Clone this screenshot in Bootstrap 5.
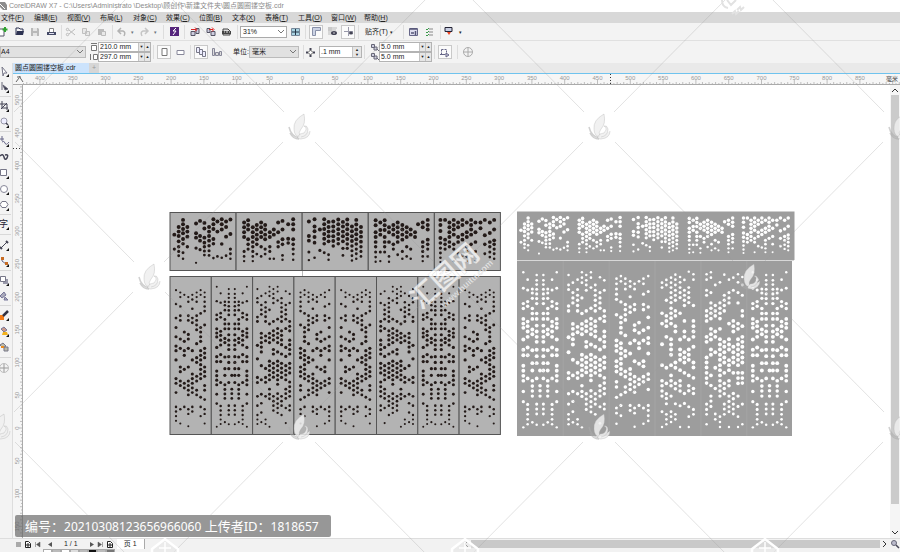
<!DOCTYPE html>
<html lang="zh-CN">
<head>
<meta charset="utf-8">
<meta name="viewport" content="width=device-width, initial-scale=1">
<title>CorelDRAW X7</title>
<link rel="stylesheet" href="https://cdn.jsdelivr.net/npm/bootstrap@5.3.0/dist/css/bootstrap.min.css">
<script src="https://cdn.jsdelivr.net/npm/bootstrap@5.3.0/dist/js/bootstrap.bundle.min.js"></script>
<style>
body{font:7px/10px "Liberation Sans","Noto Sans CJK SC",sans-serif;color:#222;background:#f3f3f3;-webkit-text-size-adjust:none}
.titlebar{height:12px;background:#fff;color:#8b8b8b}
.menus{height:11px;background:#d8d8d8}
.menus a{width:33px;color:#222;text-decoration:none;white-space:nowrap;padding-left:1px}
.tools{height:18px;border-bottom:1px solid #e0e0e0}
.tools .ib:first-child{margin-left:-5px}
.props{height:22px}
.tabs{height:11px;background:#e9e9e9;border-bottom:1px solid #6fc3ee;padding-left:13px}
.filetab{width:76px;background:#cce3fc;padding-left:2px}
.plustab{width:10px;background:#d6d6d6;color:#999}
button{border:0;background:none;padding:0;color:inherit;font:inherit;line-height:inherit}
.ib{width:16px;height:16px;display:flex;align-items:center;justify-content:center;flex:none}
.ib.on{border:1px solid #c9c9c9;background:#fbfbfb;width:14px;height:14px;margin:0 1px}
.ib.flat{width:10px;height:10px}
.arrow{width:7px;flex:none;text-align:center;font-size:5px}
.vr1{width:1px;height:14px;background:#ddd;margin:0 2px;flex:none}
.hr1{height:1px;width:11px;background:#d8d8d8;margin:1px 0;flex:none}
.hr1.wide{margin:2px 0}
.combo{position:relative;height:12px;flex:none}
.combo select{appearance:none;width:100%;height:12px;border:1px solid #bbb;background:#e1e1e1;font:inherit;padding:0 2px;display:block;border-radius:0;color:#222}
.combo.white select{background:#fff;border-color:#aaa}
.combo svg{position:absolute;right:3px;top:4px;pointer-events:none}
.w-zoom{width:47px}.w-page{width:86px}.w-unit{width:50px}.w-size{width:53px}.w-nudge{width:43px}
.num{display:flex;height:10px;border:1px solid #b3b3b3;background:#fff}
.num input{border:0;padding:0 0 0 1px;width:100%;min-width:0;font:inherit;color:#222;background:none}
.num button{width:6px;flex:none;background:#e6e6e6;font-size:4px;line-height:8px;border-left:1px solid #c4c4c4}
.num.tall{height:12px}
.num.tall button{width:9px;line-height:5px}
.toolbox{width:13px;border-right:1px solid #ddd;margin-top:-11px;background:#f3f3f3;position:relative}
.toolbox .ib{margin-left:-4px}
.rule{height:11px;background:#f6f6f6;border-bottom:1px solid #aaa}
.vrule{width:10px;background:#f6f6f6;border-right:1px solid #aaa;overflow:hidden}
.canvas{background:#fff;position:relative;overflow:hidden}
.canvas svg{position:absolute;left:0;top:0}
.vscroll{width:10px;background:#f5f5f5}
.vthumb{width:8px;background:#cbcbcb;flex:410}
.vrest{flex:24}
.status{height:11px;border-top:1px solid #ddd;background:#f2f2f2}
.pages{width:461px;flex:none}
.pagetab{width:28px;background:#fff;border-right:1px solid #aaa}
.hthumb{height:8px;background:#c9c9c9}
.palette{height:3px;background:#f2f2f2;padding-left:43px}
.palette i{width:9px;height:3px;border:1px solid #aaa;border-bottom:0}
.p1{background:#bbb}.p2{background:#fff}.p3{background:#ddd}.p4{background:#111}.p5{background:#777}
.notice{position:absolute;left:15px;bottom:15px;height:22px;padding:0 12px 0 10px;background:rgba(102,102,102,.68);color:#fff;font:13px/22px "Noto Sans","Noto Sans CJK SC",sans-serif;border-radius:2px;white-space:nowrap;z-index:5}
.notice span{font-size:12px}
.mark-layer{position:absolute;inset:0;width:100%;height:100%;pointer-events:none;z-index:6}
svg{overflow:visible;flex:none;display:block}
svg.clip1{overflow:hidden}
</style>
</head>
<body class="vh-100 overflow-hidden position-relative d-flex flex-column">
<header class="titlebar d-flex align-items-center flex-shrink-0">
<svg width="9" height="10" viewBox="0 0 9 10"><path d="M0 1h5l2 3v5H3L0 6z" fill="#8d8d8d"/><path d="M0 3l5 5" stroke="#fff"/></svg>
<span class="text-nowrap">CorelDRAW X7 - C:\Users\Administrato \Desktop\顾创作\新建文件夹\圆点圆圈镂空板.cdr</span>
</header>
<nav class="menus d-flex align-items-center flex-shrink-0" aria-label="菜单">
<a href="#">文件(<u>F</u>)</a><a href="#">编辑(<u>E</u>)</a><a href="#">视图(<u>V</u>)</a><a href="#">布局(<u>L</u>)</a><a href="#">对象(<u>C</u>)</a><a href="#">效果(<u>C</u>)</a><a href="#">位图(<u>B</u>)</a><a href="#">文本(<u>X</u>)</a><a href="#">表格(<u>T</u>)</a><a href="#">工具(<u>O</u>)</a><a href="#">窗口(<u>W</u>)</a><a href="#">帮助(<u>H</u>)</a>
</nav>
<div class="tools d-flex align-items-center flex-shrink-0" role="toolbar" aria-label="标准">
<button class="ib" aria-label="新建"><svg width="10" height="10"><path d="M1 2h5v7H1z" fill="#fff" stroke="#556"/><path d="M7 0v5M4.500 2.500h5" stroke="#2fa32f" stroke-width="2"/></svg></button>
<button class="ib" aria-label="打开"><svg width="9" height="9"><path d="M1 8V1h3l1 1h3v2" fill="none" stroke="#2d3252"/><path d="M1 8l1-4h7L8 8z" fill="#2d3252"/></svg></button>
<button class="ib" aria-label="保存"><svg width="8" height="8"><path d="M0 0h7l1 1v7H0z" fill="#b9b9b9"/><path d="M2 0h4v3H2zM2 5h4v3H2z" fill="#e5e5e5"/></svg></button>
<button class="ib" aria-label="打印"><svg width="9" height="8"><path d="M2.500 4V.5h4V4" fill="#fff" stroke="#888"/><path d="M0 4h9v3H0z" fill="#444a66"/><path d="M2 5.500h5" stroke="#dde"/></svg></button>
<i class="vr1 me-0"></i>
<button class="ib" aria-label="剪切"><svg width="9" height="8" fill="none" stroke="#bbb"><path d="M3 2l6 5M3 6l6-5"/><circle cx="1.500" cy="1.500" r="1.200"/><circle cx="1.500" cy="6.500" r="1.200"/></svg></button>
<button class="ib" aria-label="复制"><svg width="8" height="8" fill="#e8e8e8" stroke="#c0c0c0"><path d="M.5.5h4v5h-4zM3.500 3.500h4v4h-4z"/></svg></button>
<button class="ib" aria-label="粘贴"><svg width="8" height="8"><path d="M0 1h6v6H0z" fill="#bbb"/><path d="M3.500 3.500h4v4h-4z" fill="#e8e8e8" stroke="#bbb"/></svg></button>
<i class="vr1 me-0"></i>
<button class="ib" aria-label="撤消"><svg width="9" height="8"><path d="M1 3h5q3 1 1 5M4 0L1 3l3 3" fill="none" stroke="#b3b3b3" stroke-width="1.500"/></svg></button><span class="arrow text-secondary">▾</span>
<button class="ib" aria-label="重做"><svg width="9" height="8"><path d="M8 3H3Q0 4 2 8M5 0l3 3-3 3" fill="none" stroke="#c5c5c5" stroke-width="1.500"/></svg></button><span class="arrow text-secondary">▾</span>
<i class="vr1 ms-1"></i>
<button class="ib" aria-label="搜索内容"><svg width="9" height="9"><path d="M0 0h9v9H0z" fill="#55257c"/><path d="M6 1L3 4h3L3 8" stroke="#fff" fill="none"/></svg></button>
<i class="vr1"></i>
<button class="ib" aria-label="导入"><svg width="10" height="9"><path d="M1 4.500h4v4H1zM6 1.500h3v5H6z" fill="#ccd" stroke="#556"/><path d="M1 2.500h5M5 .5l2 2-2 2" stroke="#d22" fill="none"/></svg></button>
<button class="ib" aria-label="导出"><svg width="10" height="9"><path d="M1 1.500h3v4H1zM5 4.500h4v4H5z" fill="#ccd" stroke="#556"/><path d="M3 2.500h4M6 .5l2 2-2 2" stroke="#d22" fill="none"/></svg></button>
<button class="ib" aria-label="发布为PDF"><svg width="10" height="8"><path d="M1 7V1h5l2 2v4z" fill="#ddd" stroke="#444"/><path d="M0 3h9v3H0z" fill="#444"/><path d="M2 4h1M4 4h2M7 4h1" stroke="#ddd"/></svg></button>
<i class="vr1"></i>
<div class="combo white w-zoom"><select aria-label="缩放级别"><option>31%</option></select><svg width="6" height="4"><path d="M0 0l3 3 3-3" fill="none" stroke="#777"/></svg></div>
<button class="ib" aria-label="全屏预览"><svg width="9" height="8"><path d="M.5.5h8v7h-8z" fill="#a9d3e2" stroke="#78899a"/><path d="M4.500 1v6M1 4h7" stroke="#234"/></svg></button>
<i class="vr1"></i>
<button class="ib on" aria-label="显示标尺"><svg width="9" height="9"><path d="M.5.5h8v3h-5v5h-3z" fill="#ccd3e4" stroke="#8890a8"/></svg></button>
<button class="ib" aria-label="显示网格"><svg width="9" height="9"><path d="M0 1h9M0 3h8M1 0v8M3 0v8" stroke="#bbb"/><ellipse cx="6" cy="6" rx="3" ry="2" fill="#445"/><circle cx="6" cy="6" r=".7" fill="#fff"/></svg></button>
<button class="ib on" aria-label="显示辅助线"><svg width="9" height="9"><path d="M0 4.500h9M4.500 0v9" stroke="#99a"/><ellipse cx="7" cy="6" rx="2" ry="1.500" fill="#445"/></svg></button>
<i class="vr1"></i>
<button class="text-nowrap ps-1">贴齐(T)</button><span class="arrow">▾</span>
<i class="vr1 ms-2"></i>
<button class="ib" aria-label="欢迎屏幕"><svg width="9" height="8"><path d="M.5.5h8v7h-8z" fill="#dde" stroke="#668"/><path d="M1 1h7M2 5h3M6.500 3v4" stroke="#557" stroke-width="1.500"/></svg></button>
<button class="ib" aria-label="选项"><svg width="8" height="8"><path d="M3 1h4M3 4h4M3 7h4" stroke="#888"/><path d="M0 1l1 1 2-2M0 4l1 1 2-2M0 7l1 1 2-2" stroke="#3a9a4a" fill="none"/></svg></button>
<i class="vr1 me-0"></i>
<button class="ib" aria-label="应用程序启动器"><svg width="9" height="9"><path d="M1 .5h7v4H1z" fill="#c9cfe4" stroke="#223"/><path d="M3 5h4L5 8z" fill="#e42"/></svg></button><span class="arrow">▾</span>
</div>
<div class="props d-flex align-items-center flex-shrink-0" role="toolbar" aria-label="属性栏">
<div class="combo w-page"><select class="ps-0" aria-label="页面大小"><option>A4</option></select><svg width="6" height="4"><path d="M0 0l3 3 3-3" fill="none" stroke="#777"/></svg></div>
<svg class="ms-1" width="8" height="18" fill="#fff" stroke="#777"><path d="M1.500 2.500h5v5h-5zM1 .5h6M.5 11v6M3.500 11.500h4v5h-4z"/></svg>
<div class="d-flex flex-column w-size">
<div class="num"><input aria-label="页面宽度" value="210.0 mm"><button aria-label="减小">▼</button><button aria-label="增大">▲</button></div>
<div class="num"><input aria-label="页面高度" value="297.0 mm"><button aria-label="减小">▼</button><button aria-label="增大">▲</button></div></div>
<i class="vr1"></i>
<button class="ib on" aria-label="纵向"><svg width="7" height="9"><path d="M1 .5h5v7H1z" fill="#fff" stroke="#777"/></svg></button>
<button class="ib" aria-label="横向"><svg width="9" height="7"><path d="M1 1.500h7v4H1z" fill="#fff" stroke="#88889a"/></svg></button>
<i class="vr1"></i>
<button class="ib on" aria-label="所有页面"><svg width="10" height="10" fill="#eef" stroke="#778"><path d="M.5.5h3v5h-3zM3.500 2.500h3v5h-3zM6.500 4.500h3v5h-3z"/></svg></button>
<button class="ib" aria-label="当前页"><svg width="10" height="9" fill="#ddd" stroke="#889"><path d="M.5.5h2v7h-2zM3.500 4.500h3v3h-3zM7.500 3.500h2v4h-2z"/></svg></button>
<label class="ms-2 text-nowrap" for="unit">单位:</label>
<div class="combo w-unit"><select id="unit"><option>毫米</option></select><svg width="6" height="4"><path d="M0 0l3 3 3-3" fill="none" stroke="#777"/></svg></div>
<i class="vr1 ms-1"></i>
<svg class="me-1" width="9" height="9"><path d="M4.500 2L7 4.500 4.500 7 2 4.500z" fill="#fff" stroke="#555"/><path d="M4.500 0v2M4.500 7v2M0 4.500h2M7 4.500h2" stroke="#445" stroke-width="2"/></svg>
<div class="num tall w-nudge"><input aria-label="微调距离" value=".1 mm"><button aria-label="微调">▲<br>▼</button></div>
<i class="vr1"></i>
<svg class="ms-1" width="8" height="18" fill="#ccd" stroke="#667"><path d="M.5 1.500h3v3h-3zM3 4h3v3H3zM.5 10.500h3v3h-3zM3 13h3v3H3zM6 6l2 2M6 15l2 2"/></svg>
<div class="d-flex flex-column w-size">
<div class="num"><input aria-label="再制X" value="5.0 mm"><button aria-label="减小">▼</button><button aria-label="增大">▲</button></div>
<div class="num"><input aria-label="再制Y" value="5.0 mm"><button aria-label="减小">▼</button><button aria-label="增大">▲</button></div></div>
<i class="vr1"></i>
<button class="ib on" aria-label="视为填充"><svg width="9" height="9"><path d="M1.500 1.500h5v5h-5z" fill="none" stroke="#668" stroke-dasharray="2 1"/><path d="M0 6.500h5M6 5l3 2-3 2z" stroke="#668" fill="#ccd"/></svg></button>
<i class="vr1 ms-1"></i>
<button class="ib" aria-label="快速自定义"><svg width="10" height="10" fill="none" stroke="#aaa"><circle cx="5" cy="5" r="4.500"/><path d="M5 1v8M1 5h8"/></svg></button>
</div>
<div class="tabs d-flex flex-shrink-0">
<button class="filetab text-nowrap text-start">圆点圆圈镂空板.cdr</button><button class="plustab" aria-label="新建文档">+</button>
</div>
<main class="d-flex flex-grow-1 overflow-visible" style="min-height:0">
<div class="toolbox flex-shrink-0" id="toolbox" role="toolbar" aria-label="工具箱"></div>
<div class="d-flex flex-column flex-grow-1" style="min-width:0">
<div class="rule flex-shrink-0 overflow-hidden"><svg id="hr" width="100%" height="10"></svg></div>
<div class="d-flex flex-grow-1" style="min-height:0">
<div class="vrule flex-shrink-0"><svg id="vr" width="10" height="100%"></svg></div>
<div class="canvas flex-grow-1"><svg id="art" width="867" height="454" viewBox="23 85 867 454"></svg></div>
<div class="vscroll d-flex flex-column align-items-center flex-shrink-0"><button class="ib flat" aria-label="向上"><svg width="6" height="4"><path d="M0 4l3-3 3 3" fill="none" stroke="#333"/></svg></button><div class="vthumb"></div><div class="vrest"></div><button class="ib flat" aria-label="向下"><svg width="6" height="4"><path d="M0 0l3 3 3-3" fill="none" stroke="#333"/></svg></button></div>
</div></div></main>
<footer class="status d-flex align-items-center flex-shrink-0">
<div class="pages d-flex align-items-center gap-1 ps-3">
<svg width="5" height="5"><path d="M0 0h5v5H0z" fill="#aaa"/></svg>
<button aria-label="在前面添加页"><svg width="6" height="7"><path d="M.5.5h3l2 2v4h-5z" fill="#fff" stroke="#222"/><path d="M3 2v4M1 4h4" stroke="#222"/></svg></button>
<button aria-label="首页"><svg width="5" height="5"><path d="M.5 0v5M5 0L1.500 2.500 5 5z" stroke="#555" stroke-width=".5" fill="#555"/></svg></button>
<button class="ms-1" aria-label="上一页"><svg width="4" height="5"><path d="M4 0L0 2.500 4 5z" fill="#555"/></svg></button>
<span class="mx-2 text-nowrap">1 / 1</span>
<button aria-label="下一页"><svg width="4" height="5"><path d="M0 0l4 2.500L0 5z" fill="#555"/></svg></button>
<button aria-label="末页"><svg width="5" height="5"><path d="M4.500 0v5M0 0l3.500 2.500L0 5z" stroke="#555" stroke-width=".5" fill="#555"/></svg></button>
<button aria-label="在后面添加页"><svg width="6" height="7"><path d="M.5.5h3l2 2v4h-5z" fill="#fff" stroke="#222"/><path d="M3 2v4M1 4h4" stroke="#222"/></svg></button>
<button class="pagetab">页 1</button></div>
<button class="ib flat" aria-label="向左"><svg width="4" height="6"><path d="M4 0L1 3l3 3" fill="none" stroke="#333"/></svg></button>
<div class="hthumb flex-grow-1"></div>
<button class="ib flat" aria-label="向右"><svg width="4" height="6"><path d="M0 0l3 3-3 3" fill="none" stroke="#333"/></svg></button>
<button class="ib flat" aria-label="导航器"><svg width="8" height="8"><circle cx="3" cy="3" r="2.500" fill="#bbc" stroke="#667"/><path d="M5 5l3 3" stroke="#445" stroke-width="1.500"/></svg></button>
</footer>
<div class="palette d-flex flex-shrink-0"><i class="p2"></i><i class="p1"></i><i class="p2"></i><i class="p3"></i><i class="p1"></i><i class="p4"></i><i class="p1"></i><i class="p5"></i></div>
<div class="notice">编号：<span>20210308123656966060</span> 上传者ID：<span>1818657</span></div>
<svg class="mark-layer clip1" id="marks" aria-hidden="true"></svg>
<script>
// Toolbox glyphs; numbers are separators.
const G=[
['选择','<path d="M3 1l5 6-3 0-1 3z" fill="#fff" stroke="#778"/>',1],
['形状','<path d="M3 0v8M4 3l5 4-3 1z" stroke="#667" fill="#334"/>',1],0,
['裁剪','<path d="M3 0v7h6M0 3h8v6M2 8l6-6" fill="none" stroke="#445"/>',1],
['缩放','<circle cx="5" cy="4" r="3" fill="#eef" stroke="#99a"/><path d="M7 6l2 2" stroke="#445" stroke-width="1.500"/>',1],0,
['手绘','<path d="M3 0v5M1 3h4M3 6q2-2 3 1t4-1" fill="none" stroke="#668"/>',1],
['艺术笔','<path d="M1 4q3-3 4 1t3 1q2-4-2-3" fill="none" stroke="#445" stroke-width="1.500"/>',0],
['矩形','<path d="M1.500 1.500h6v6h-6z" fill="#fff" stroke="#778"/>',1],
['椭圆','<circle cx="5" cy="5" r="3.500" fill="#fff" stroke="#889"/>',1],
['多边形','<path d="M3 1.500h4l2 3-2 3H3l-2-3z" fill="#fff" stroke="#778"/>',1],0,
['文本','<text x="0" y="8" font-size="9" fill="#223">字</text>',1],1,
['度量','<path d="M2 8l6-6" stroke="#445"/><path d="M1 7l2 2M7 1l2 2" stroke="#445" stroke-width="2"/>',1],
['连接器','<path d="M3 2v3l4 3" fill="none" stroke="#668"/><path d="M2 1h3v3H2zM6 6h3v3H6z" fill="#c76b23"/>',1],0,
['阴影','<path d="M4 4h5v5H4z" fill="#99a"/><path d="M1.500 1.500h5v5h-5z" fill="#fff" stroke="#778"/>',1],
['透明度','<path d="M1 5l4-4 2 3-4 3zM6 6l3 3H5z" fill="#aab" stroke="#779"/>',0],0,
['颜色滴管','<path d="M0 5h5v5H0z" fill="#f47b16"/><path d="M4 6l5-5" stroke="#334" stroke-width="2.500"/>',1],
['交互式填充','<path d="M2 3l3-2 3 3-3 2z" fill="#c98" stroke="#779"/><path d="M4 6h4l1 3H3z" fill="#f2b21c"/>',1],
['智能填充','<path d="M1 3l3-2 3 3-3 2zM5 5h4v4H5z" fill="#bba" stroke="#778"/><path d="M2 4h3v2H2z" fill="#e98b1f"/>',0],1,
['快速自定义','<circle cx="5" cy="5" r="4.500" fill="none" stroke="#bbb"/><path d="M5 1v8M1 5h8" stroke="#999"/>',0]];
document.getElementById('toolbox').innerHTML=G.map(g=>Array.isArray(g)?`<button class="ib" aria-label="${g[0]}"><svg width="10" height="10">${g[1]}${g[2]?'<path d="M10 8v3H7z" fill="#111"/>':''}</svg></button>`:`<div class="hr1${g?' wide':''}"></div>`).join('');

// Rulers: one label per 50 mm, 32.8 px apart.
const S=32.8;let h='',v='';
for(let i=-86;302.3+i*S/10<innerWidth;i++){const x=302.3-13+i*S/10;if(x<10)continue;const m=i%10===0;
 h+=`<path d="M${x} 10v${m?-4:i%2?-1:-2}" stroke="#999" stroke-width=".6"/>`;
 if(m&&x<innerWidth-45)h+=`<text x="${x}" y="6" font-size="6" text-anchor="middle" fill="#999">${Math.abs(i)*5}</text>`}
h+='<path d="M4 3h4M6 2l4 6M3 8l3-4" stroke="#666" fill="none"/><path d="M597.500 0v10" stroke="#333" stroke-dasharray="1 2"/>';
document.getElementById('hr').innerHTML=h+'<text x="100%" dx="-2" y="7" font-size="6" text-anchor="end" fill="#444">毫米</text>';
for(let i=-104;428+i*S/10<innerHeight-14;i++){const y=428-85+i*S/10;const m=i%10===0;
 v+=`<path d="M9 ${y}h${m?-3:i%2?-1:-2}" stroke="#999" stroke-width=".6"/>`;
 if(m)v+=`<text transform="translate(6 ${y}) rotate(-90)" font-size="6" text-anchor="middle" fill="#999">${Math.abs(i)*5}</text>`}
document.getElementById('vr').innerHTML=v+'<path d="M0 63.500h9" stroke="#333" stroke-dasharray="1 2"/>';

// Perforation patterns: width, height, left origin, top origin, then x:[y...] per column.
const P={
A:[124,475,15,18,{33:[59,101,143,171,199,227,241,269,325,339,367,410,424,438,452],46:[66,80,108,136,150,206,234,290,304,332,346,417,460],58:[73,185,213,241,255,297,339,353,410],70:[80,94,136,150,192,206,234,290,332,346,360,374,417,431,468],82:[73,87,115,143,157,241,269,311,325,339,353,367,410,424],95:[66,80,94,136,150,164,178,220,262,276,318,332,360,374],107:[59,73,129,171,185,199,213,241,255,269,283,297,311,325,381,410,438],119:[66,80,94,108,122,164,234,248,262,290,304,318,346,360,388,417,431,460]}],
B:[137,526,16,2,{34:[36,84,130,145,176,190,203,238,269,285,317,332,347,362,394,425,502],47:[58,89,124,138,184,198,214,230,262,285,355,433,448,463,478,493],61:[86,98,114,145,160,176,208,222,270,309,331,362,378,393,408,487],74:[44,60,73,87,101,115,130,160,176,196,214,230,245,269,288,309,355,432,447,462,494],84:[331,377,392,408],94:[44,60,73,87,101,115,130,160,176,196,214,230,245,269,288,309,331,355,432,447,462,494],107:[86,98,114,145,160,176,208,222,270,309,331,362,378,393,408,487],120:[58,89,124,138,184,198,214,230,262,285,355,433,448,463,478,493],134:[36,84,130,145,176,190,203,238,269,285,317,332,347,362,394,425,502]}],
C:[137,526,154,2,{170:[44,74,88,137,152,231,276,338,355,401,432,463,478,493],183:[67,97,113,128,191,206,222,237,253,299,346,394,424,455,487],197:[58,88,105,120,136,152,200,216,308,338,354,401,478,493],210:[36,52,67,113,160,191,206,222,284,299,315,330,346,377,394,409,502],223:[44,60,74,90,152,183,198,213,245,260,291,307,322,337,401,417,432,448],237:[36,52,82,144,175,191,206,222,253,284,299,315,331,346,361,392,409,425,440,456],250:[74,90,105,120,136,152,183,198,213,229,260,291,307,322,338,401,417,432,463],264:[51,97,113,128,144,175,238,268,299,315,330,346,377,392,408,440,490],277:[60,90,152,168,183,214,229,245,260,291,307,323,353,369,385,401,432,447]}],
D:[137,526,-1,2,{20:[67,82,159,190,252,315,362,377,393,408,455,501],33:[59,74,120,167,182,198,230,323,370,401,415,431,463,478,493],47:[52,67,82,97,112,127,144,159,174,190,237,253,268,284,315,346,362,377,408,455,470,486],60:[43,58,74,90,105,120,152,167,198,214,307,323,370,386,431,463,478],74:[50,66,82,97,112,159,238,268,284,299,330,362,377,393,437,501],87:[59,90,105,120,136,182,214,230,276,292,307,338,400,430],100:[34,82,97,112,127,238,268,284,299,346,377,392,440,470,501],114:[42,58,136,182,198,214,230,260,307,322,353,385,400,448,463]}],
E:[137,526,137,2,{154:[42,58,90,105,152,167,182,230,245,292,307,322,338,354,369,432,448,463,493],167:[36,52,97,128,144,159,175,206,222,238,268,284,346,376,408,423,439],180:[74,136,152,167,214,230,276,323,385,462,478],194:[66,128,144,159,175,206,237,253,268,284,299,315,330,346,362,377,393,408,470,486,501],207:[43,105,120,136,152,245,260,276,292,307,338,370,385,401,432,447,463],221:[58,97,113,128,190,237,253,268,300,315,330,362,377,408,424,440,455,501],234:[52,90,182,198,214,260,276,292,307,338,400,416,432,447,462],248:[42,66,97,128,190,206,237,253,268,284,299,315,338,354,370,408,439,470,501],261:[50,74,105,152,167,198,230,245,260,276,292,307,338,354,369,432,493]}],
T1:[198,173,15,22,{28:[88,131],41:[65,79,92,108,124,138,151],54:[44,57,71,84,101,115,142,160],67:[65,79,94,124],93:[55,84,97,128,172],105:[47,92,106,133],118:[53,70,97,112,124,137,149],132:[65,79,92,106,121,136,150],145:[42,57,71,101,115,158],157:[49,79,153],170:[42,57,73,116,157],183:[49,65,94,151],196:[43,86,131,145,160]}],
T2:[198,173,214,22,{238:[52,66,81,95,138,153,167],250:[45,59,73,102,117,131],264:[66,81,95,110,124,138,153,167],276:[59,73,88,102,117,146],289:[52,66,81,95,124,153],301:[59,73,88,102,131,146],315:[81,95,124,138,160],327:[73,88,160],340:[52,81,110,124],353:[47,73,102,117,150,163],370:[57,100,113],385:[42,57,73,102,117,131,146,163]}],
T3:[198,173,412,22,{432:[49,92,106,140,164],449:[42,64,78,95,112,157],465:[73,135],478:[42,57,71,86,100,115,142],491:[50,65,79,93,108,148,163],505:[49,64,78,93,107,122],520:[43,57,72,86,101,115],534:[50,64,79,93,108,129,150],547:[43,58,72,87,101,116,129],561:[64,78,93,107,122,136,151,165],574:[44,58,73,87,102,116,131,145,160],588:[65,80,94,109,124,138,153]}],
T4:[198,173,611,22,{633:[45,60,81,95,110,124,140,155,169],647:[52,74,88,140,167],660:[45,60,74,95,110,124,140],673:[66,81,110,153,169],686:[59,73,88,117,131],699:[52,66,81,95,110,148],713:[59,73,88,103,138,160],726:[66,81,95,124,153],738:[73,88,131,160],751:[81,95],760:[57],774:[52,66,110,124,138,153,167],789:[44,59,73,103,117,131,153]}],
T5:[198,173,809,22,{827:[44,59,77,98,113,128,143,157,170],841:[44,103,117,131],854:[52,66,81,95,110,124],867:[44,59,73,88,117,131,167],880:[52,66,95,110,145],893:[44,59,88,103,150],906:[52,81,95,124,138,153,167],919:[44,59,73,88,117],932:[52,81,110,138,167],947:[52,69],960:[44,90,117,145],975:[52,83,110,124,140,155],988:[44,73,105,117,131,145,160]}]};
function panel(k,x,y,w,hh,c,f,flip){const[pw,ph,ox,oy,cols]=P[k];let o='';
 for(const cx in cols)for(const cy of cols[cx]){let u=(cx-ox)/pw,t=(cy-oy)/ph;if(flip)u=1-u;
  const r=k[0]==='T'?2.15-1.1*Math.max(0,t-.45)/.5:1.0+.8*Math.pow(Math.sin(Math.PI*Math.min(1,Math.max(0,(t-.03)/.95))),.9);
  o+=`<circle cx="${(x+u*w).toFixed(2)}" cy="${(y+t*hh).toFixed(2)}" r="${(r*f).toFixed(2)}"/>`}
 return `<g fill="${c}">${o}</g>`}
let a='<path d="M302.500 268v9" stroke="#bbb"/>';
for(let i=0;i<5;i++){const x=170+i*66.1;a+=`<rect x="${x}" y="212.500" width="66" height="58" fill="#b3b3b3" stroke="#555"/>`+panel('T'+(i+1),x,212.5,66.1,58,'#231a18',.92)}
[['A'],['B'],['C'],['A',1],['A'],['C',1],['B'],['A']].forEach((p,i)=>{const x=170+i*41.3;a+=`<rect x="${x}" y="276.500" width="41.300" height="158" fill="#b3b3b3" stroke="#555"/>`+panel(p[0],x,276.5,41.3,158,'#231a18',.9,p[1])});
a+='<rect x="517" y="211.500" width="277.500" height="48.500" fill="#9d9d9d"/><rect x="517" y="261" width="275" height="175" fill="#9d9d9d"/><path d="M517 260.500h277" stroke="#d8d8d8"/>';
for(let i=0;i<5;i++)a+=panel('T'+(i+1),517.3+i*55.3,212,55,48,'#fff',.82);
[['B'],['C'],['A',1],['D'],['E'],['B']].forEach((p,i)=>{const x=517.3+i*45.9;if(i)a+=`<path d="M${x} 261v175" stroke="#a9a9a9" stroke-width=".7"/>`;a+=panel(p[0],x,261,45.8,175,'#fff',1.1,p[1])});
document.getElementById('art').innerHTML=a;

// Watermark lattice.
let m='<g stroke="#999" stroke-opacity=".36" stroke-width=".8">';
for(let j=-1;j<3;j++)for(let i=-1;i<5;i++)
 for(const [x,y] of [[299+i*300,127+j*300],[149+i*300,-23+j*300]])
  m+=`<path d="M${x+16} ${y+15}l119 120M${x-16} ${y+15}l-119 120"/>`;
m+='</g>';
for(const[x,y]of[[299,127],[599,127],[899,127],[149,277],[749,277],[-1,427],[299,427],[599,427],[899,427]])
 m+=`<g transform="translate(${x-10} ${y-13})" fill="#eee" fill-opacity=".85" stroke="#aaa" stroke-opacity=".55" stroke-width=".6"><path d="M15 0Q4 6 5 15q0 7 6 8-2-5 1-8 5-5 3-15z"/><path d="M0 13q2 9 10 11M1 19q3 6 9 6" fill="none" stroke-width="1.500"/><path d="M12 23q7-1 7-8-1-4-4-3 3 1 2 4-1 4-6 4-5 5 1 5 9-1 9-8"/></g>`;
m+='<g transform="translate(449 277) rotate(-42)" fill="#fff" fill-opacity=".72" stroke="#999" stroke-opacity=".3" stroke-width=".5" font-weight="700"><text x="-43" y="6" font-size="27" font-family="Noto Sans CJK SC,sans-serif">汇图网</text><text x="-24" y="20" font-size="9" font-family="Liberation Sans,sans-serif">www.huitu.com</text></g>';
m+='<path d="M722 0q0 7 6 8M727 0l4 5 5-5M732 14l3-3 1 3 3-3M737 10l3-3 1 3 3-3" fill="none" stroke="#e2e2e2" stroke-width="2"/>';
for(const x of[165,465,765])m+=`<path d="M${x-13} 549l13-10 13 10v5h-26z" fill="#e6e6e6" fill-opacity=".6" stroke="#fff" stroke-width="2.500"/><path d="M${x} 542v10M${x-6} 548h12" stroke="#fff" stroke-width="1.500"/>`;
document.getElementById('marks').innerHTML=m;
</script>
</body>
</html>
